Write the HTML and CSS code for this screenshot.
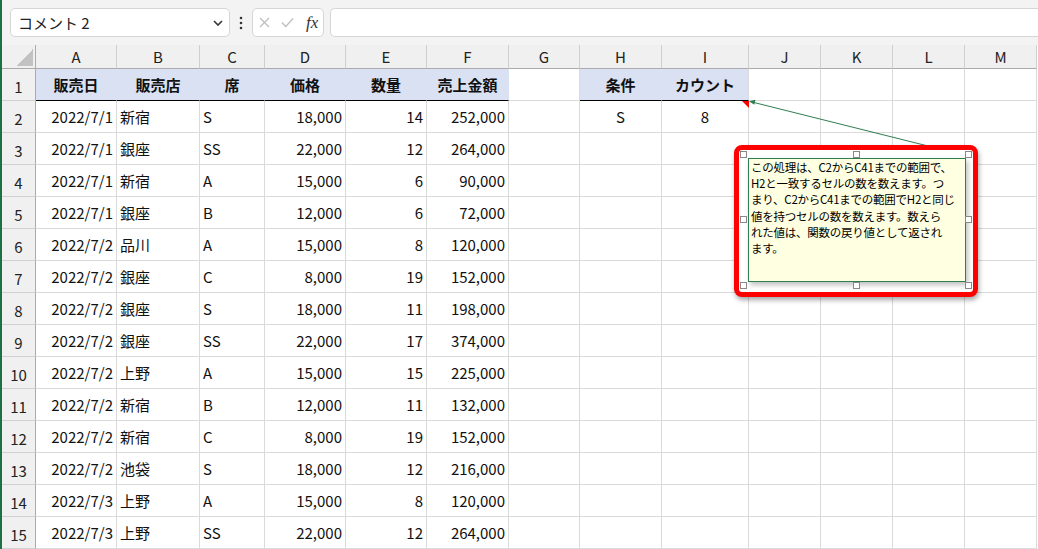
FILE: index.html
```html
<!DOCTYPE html>
<html lang="ja">
<head>
<meta charset="utf-8">
<title>Excel コメント</title>
<link rel="stylesheet" href="styles.css">
</head>
<body>
<div class="app">
  <div class="fbar">
    <div class="namebox">
      <span>コメント 2</span>
      <svg class="chev" width="10" height="6" viewBox="0 0 10 6"><polyline points="1,1 5,5 9,1" fill="none" stroke="#333" stroke-width="1.6"/></svg>
    </div>
    <div class="dots">
      <svg width="4" height="14" viewBox="0 0 4 14"><circle cx="2" cy="2" r="1.3" fill="#333"/><circle cx="2" cy="7" r="1.3" fill="#333"/><circle cx="2" cy="12" r="1.3" fill="#333"/></svg>
    </div>
    <div class="fxbox">
      <svg width="11" height="11" viewBox="0 0 11 11"><path d="M1 1L10 10M10 1L1 10" stroke="#bdbdbd" stroke-width="1.2" fill="none"/></svg>
      <svg width="13" height="11" viewBox="0 0 13 11"><polyline points="1,5.5 4.8,9.5 12,1.5" stroke="#bdbdbd" stroke-width="1.2" fill="none"/></svg>
      <span class="fx">fx</span>
    </div>
    <div class="input"></div>
  </div>

  <div class="sheet">
    <div class="corner"><div class="tri"></div></div>
    <div class="ch">A</div><div class="ch">B</div><div class="ch">C</div><div class="ch">D</div><div class="ch">E</div><div class="ch">F</div><div class="ch">G</div><div class="ch">H</div><div class="ch">I</div><div class="ch">J</div><div class="ch">K</div><div class="ch">L</div><div class="ch">M</div>

    <div class="rh">1</div>
    <div class="c hd">販売日</div><div class="c hd">販売店</div><div class="c hd">席</div><div class="c hd">価格</div><div class="c hd">数量</div><div class="c hd">売上金額</div><div class="c"></div><div class="c hd">条件</div><div class="c hd hd-end">カウント</div><div class="c"></div><div class="c"></div><div class="c"></div><div class="c"></div>

    <div class="rh">2</div>
    <div class="c r">2022/7/1</div><div class="c">新宿</div><div class="c">S</div><div class="c r">18,000</div><div class="c r">14</div><div class="c r">252,000</div><div class="c"></div><div class="c m">S</div><div class="c m">8</div><div class="c"></div><div class="c"></div><div class="c"></div><div class="c"></div>

    <div class="rh">3</div>
    <div class="c r">2022/7/1</div><div class="c">銀座</div><div class="c">SS</div><div class="c r">22,000</div><div class="c r">12</div><div class="c r">264,000</div><div class="c"></div><div class="c"></div><div class="c"></div><div class="c"></div><div class="c"></div><div class="c"></div><div class="c"></div>

    <div class="rh">4</div>
    <div class="c r">2022/7/1</div><div class="c">新宿</div><div class="c">A</div><div class="c r">15,000</div><div class="c r">6</div><div class="c r">90,000</div><div class="c"></div><div class="c"></div><div class="c"></div><div class="c"></div><div class="c"></div><div class="c"></div><div class="c"></div>

    <div class="rh">5</div>
    <div class="c r">2022/7/1</div><div class="c">銀座</div><div class="c">B</div><div class="c r">12,000</div><div class="c r">6</div><div class="c r">72,000</div><div class="c"></div><div class="c"></div><div class="c"></div><div class="c"></div><div class="c"></div><div class="c"></div><div class="c"></div>

    <div class="rh">6</div>
    <div class="c r">2022/7/2</div><div class="c">品川</div><div class="c">A</div><div class="c r">15,000</div><div class="c r">8</div><div class="c r">120,000</div><div class="c"></div><div class="c"></div><div class="c"></div><div class="c"></div><div class="c"></div><div class="c"></div><div class="c"></div>

    <div class="rh">7</div>
    <div class="c r">2022/7/2</div><div class="c">銀座</div><div class="c">C</div><div class="c r">8,000</div><div class="c r">19</div><div class="c r">152,000</div><div class="c"></div><div class="c"></div><div class="c"></div><div class="c"></div><div class="c"></div><div class="c"></div><div class="c"></div>

    <div class="rh">8</div>
    <div class="c r">2022/7/2</div><div class="c">銀座</div><div class="c">S</div><div class="c r">18,000</div><div class="c r">11</div><div class="c r">198,000</div><div class="c"></div><div class="c"></div><div class="c"></div><div class="c"></div><div class="c"></div><div class="c"></div><div class="c"></div>

    <div class="rh">9</div>
    <div class="c r">2022/7/2</div><div class="c">銀座</div><div class="c">SS</div><div class="c r">22,000</div><div class="c r">17</div><div class="c r">374,000</div><div class="c"></div><div class="c"></div><div class="c"></div><div class="c"></div><div class="c"></div><div class="c"></div><div class="c"></div>

    <div class="rh">10</div>
    <div class="c r">2022/7/2</div><div class="c">上野</div><div class="c">A</div><div class="c r">15,000</div><div class="c r">15</div><div class="c r">225,000</div><div class="c"></div><div class="c"></div><div class="c"></div><div class="c"></div><div class="c"></div><div class="c"></div><div class="c"></div>

    <div class="rh">11</div>
    <div class="c r">2022/7/2</div><div class="c">新宿</div><div class="c">B</div><div class="c r">12,000</div><div class="c r">11</div><div class="c r">132,000</div><div class="c"></div><div class="c"></div><div class="c"></div><div class="c"></div><div class="c"></div><div class="c"></div><div class="c"></div>

    <div class="rh">12</div>
    <div class="c r">2022/7/2</div><div class="c">新宿</div><div class="c">C</div><div class="c r">8,000</div><div class="c r">19</div><div class="c r">152,000</div><div class="c"></div><div class="c"></div><div class="c"></div><div class="c"></div><div class="c"></div><div class="c"></div><div class="c"></div>

    <div class="rh">13</div>
    <div class="c r">2022/7/2</div><div class="c">池袋</div><div class="c">S</div><div class="c r">18,000</div><div class="c r">12</div><div class="c r">216,000</div><div class="c"></div><div class="c"></div><div class="c"></div><div class="c"></div><div class="c"></div><div class="c"></div><div class="c"></div>

    <div class="rh">14</div>
    <div class="c r">2022/7/3</div><div class="c">上野</div><div class="c">A</div><div class="c r">15,000</div><div class="c r">8</div><div class="c r">120,000</div><div class="c"></div><div class="c"></div><div class="c"></div><div class="c"></div><div class="c"></div><div class="c"></div><div class="c"></div>

    <div class="rh">15</div>
    <div class="c r">2022/7/3</div><div class="c">上野</div><div class="c">SS</div><div class="c r">22,000</div><div class="c r">12</div><div class="c r">264,000</div><div class="c"></div><div class="c"></div><div class="c"></div><div class="c"></div><div class="c"></div><div class="c"></div><div class="c"></div>
  </div>
</div>

<svg class="connector" width="1038" height="549" viewBox="0 0 1038 549">
  <polygon points="742,101 749,101 749,108" fill="#ff0000"/>
  <line x1="968" y1="156" x2="754" y2="102.5" stroke="#2f7d52" stroke-width="1"/>
  <polygon points="749,101.2 755.4,99.8 754.3,104.8" fill="#2f7d52"/>
</svg>

<div class="callout">
  <div class="note">この処理は、C2からC41までの範囲で、<br>H2と一致するセルの数を数えます。つ<br>まり、C2からC41までの範囲でH2と同じ<br>値を持つセルの数を数えます。数えら<br>れた値は、関数の戻り値として返され<br>ます。</div>
  <span class="hdl h-tl"></span><span class="hdl h-tm"></span><span class="hdl h-tr"></span>
  <span class="hdl h-ml"></span><span class="hdl h-mr"></span>
  <span class="hdl h-bl"></span><span class="hdl h-bm"></span><span class="hdl h-br"></span>
</div>
</body>
</html>
```

FILE: styles.css
```css
html, body {
  margin: 0;
  padding: 0;
}
body {
  width: 1038px;
  height: 549px;
  overflow: hidden;
  background: #ffffff;
  font-family: "Noto Sans CJK JP", "Liberation Sans", sans-serif;
}
.app {
  border-left: 2px solid #1e7145;
  height: 549px;
  box-sizing: border-box;
}

/* formula bar */
.fbar {
  display: flex;
  height: 45px;
  box-sizing: border-box;
  padding: 8px 0 8px 8px;
  background: #f3f3f3;
}
.namebox {
  width: 220px;
  box-sizing: border-box;
  border: 1px solid #d6d6d6;
  border-radius: 5px;
  background: #fff;
  display: flex;
  align-items: center;
  justify-content: space-between;
  padding: 0 6px 0 7px;
  font-size: 15px;
  color: #222;
}
.dots {
  width: 22px;
  display: flex;
  align-items: center;
  justify-content: center;
}
.fxbox {
  width: 72px;
  box-sizing: border-box;
  border: 1px solid #d6d6d6;
  border-radius: 5px;
  background: #fff;
  display: flex;
  align-items: center;
  padding-left: 6px;
  gap: 11px;
}
.fx {
  font-family: "Liberation Serif", serif;
  font-style: italic;
  font-size: 17px;
  color: #333;
  margin-left: 1px;
}
.input {
  flex: 1;
  margin-left: 6px;
  border: 1px solid #d6d6d6;
  border-right: none;
  border-radius: 5px 0 0 5px;
  background: #fff;
}

/* sheet grid */
.sheet {
  display: grid;
  grid-template-columns: 34px 81px 83px 65px 81px 81px 82px 71px 82px 87px 72px 72px 72px 72px;
  grid-template-rows: 24px repeat(15, 32px);
}
.corner {
  background: #f0f0f0;
  border-right: 1px solid #ababab;
  border-bottom: 1px solid #ababab;
  display: flex;
  align-items: flex-end;
  justify-content: flex-end;
  padding: 0 2px 2px 0;
}
.tri {
  width: 17px;
  height: 17px;
  background: linear-gradient(to bottom right, transparent 50%, #c2c2c2 50%);
}
.ch {
  background: #f0f0f0;
  border-right: 1px solid #cfcfcf;
  border-bottom: 1px solid #ababab;
  display: flex;
  align-items: center;
  justify-content: center;
  font-size: 15px;
  color: #222;
}
.rh {
  background: #f0f0f0;
  border-right: 1px solid #ababab;
  border-bottom: 1px solid #d2d2d2;
  display: flex;
  align-items: center;
  justify-content: center;
  padding-top: 4px;
  font-size: 15px;
  color: #222;
}
.c {
  border-right: 1px solid #dadada;
  border-bottom: 1px solid #dadada;
  display: flex;
  align-items: center;
  padding: 0 3px;
  font-size: 15px;
  color: #111;
  white-space: nowrap;
  overflow: hidden;
  min-width: 0;
}
.r { justify-content: flex-end; }
.m { justify-content: center; }
.hd {
  background: #d9e1f2;
  font-weight: bold;
  justify-content: center;
  border-right-color: #d9e1f2;
  border-bottom-color: #000;
}
.hd-end { border-right-color: #dadada; }

/* overlays */
.connector {
  position: absolute;
  left: 0;
  top: 0;
  pointer-events: none;
}
.callout {
  position: absolute;
  left: 734px;
  top: 145px;
  width: 244px;
  height: 152px;
  box-sizing: border-box;
  border: 5px solid #ff0000;
  border-radius: 8px;
  background: #fff;
  box-shadow: 1px 3px 5px rgba(0, 0, 0, 0.35);
}
.note {
  position: absolute;
  left: 9px;
  top: 8px;
  width: 218px;
  height: 124px;
  box-sizing: border-box;
  border: 1px solid #2f7d52;
  background: #ffffe1;
  box-shadow: 2px 3px 5px rgba(0, 0, 0, 0.25);
  padding: 0 2px;
  font-size: 11.5px;
  letter-spacing: -0.25px;
  line-height: 16.2px;
  color: #000;
  white-space: nowrap;
  overflow: hidden;
}
.hdl {
  position: absolute;
  width: 7px;
  height: 7px;
  box-sizing: border-box;
  border: 1px solid #888;
  background: #fff;
}
.h-tl { left: 1px; top: 1px; }
.h-tm { left: 114px; top: 1px; }
.h-tr { left: 226px; top: 1px; }
.h-ml { left: 1px; top: 66px; }
.h-mr { left: 226px; top: 66px; }
.h-bl { left: 1px; top: 132px; }
.h-bm { left: 114px; top: 132px; }
.h-br { left: 226px; top: 132px; }
```
